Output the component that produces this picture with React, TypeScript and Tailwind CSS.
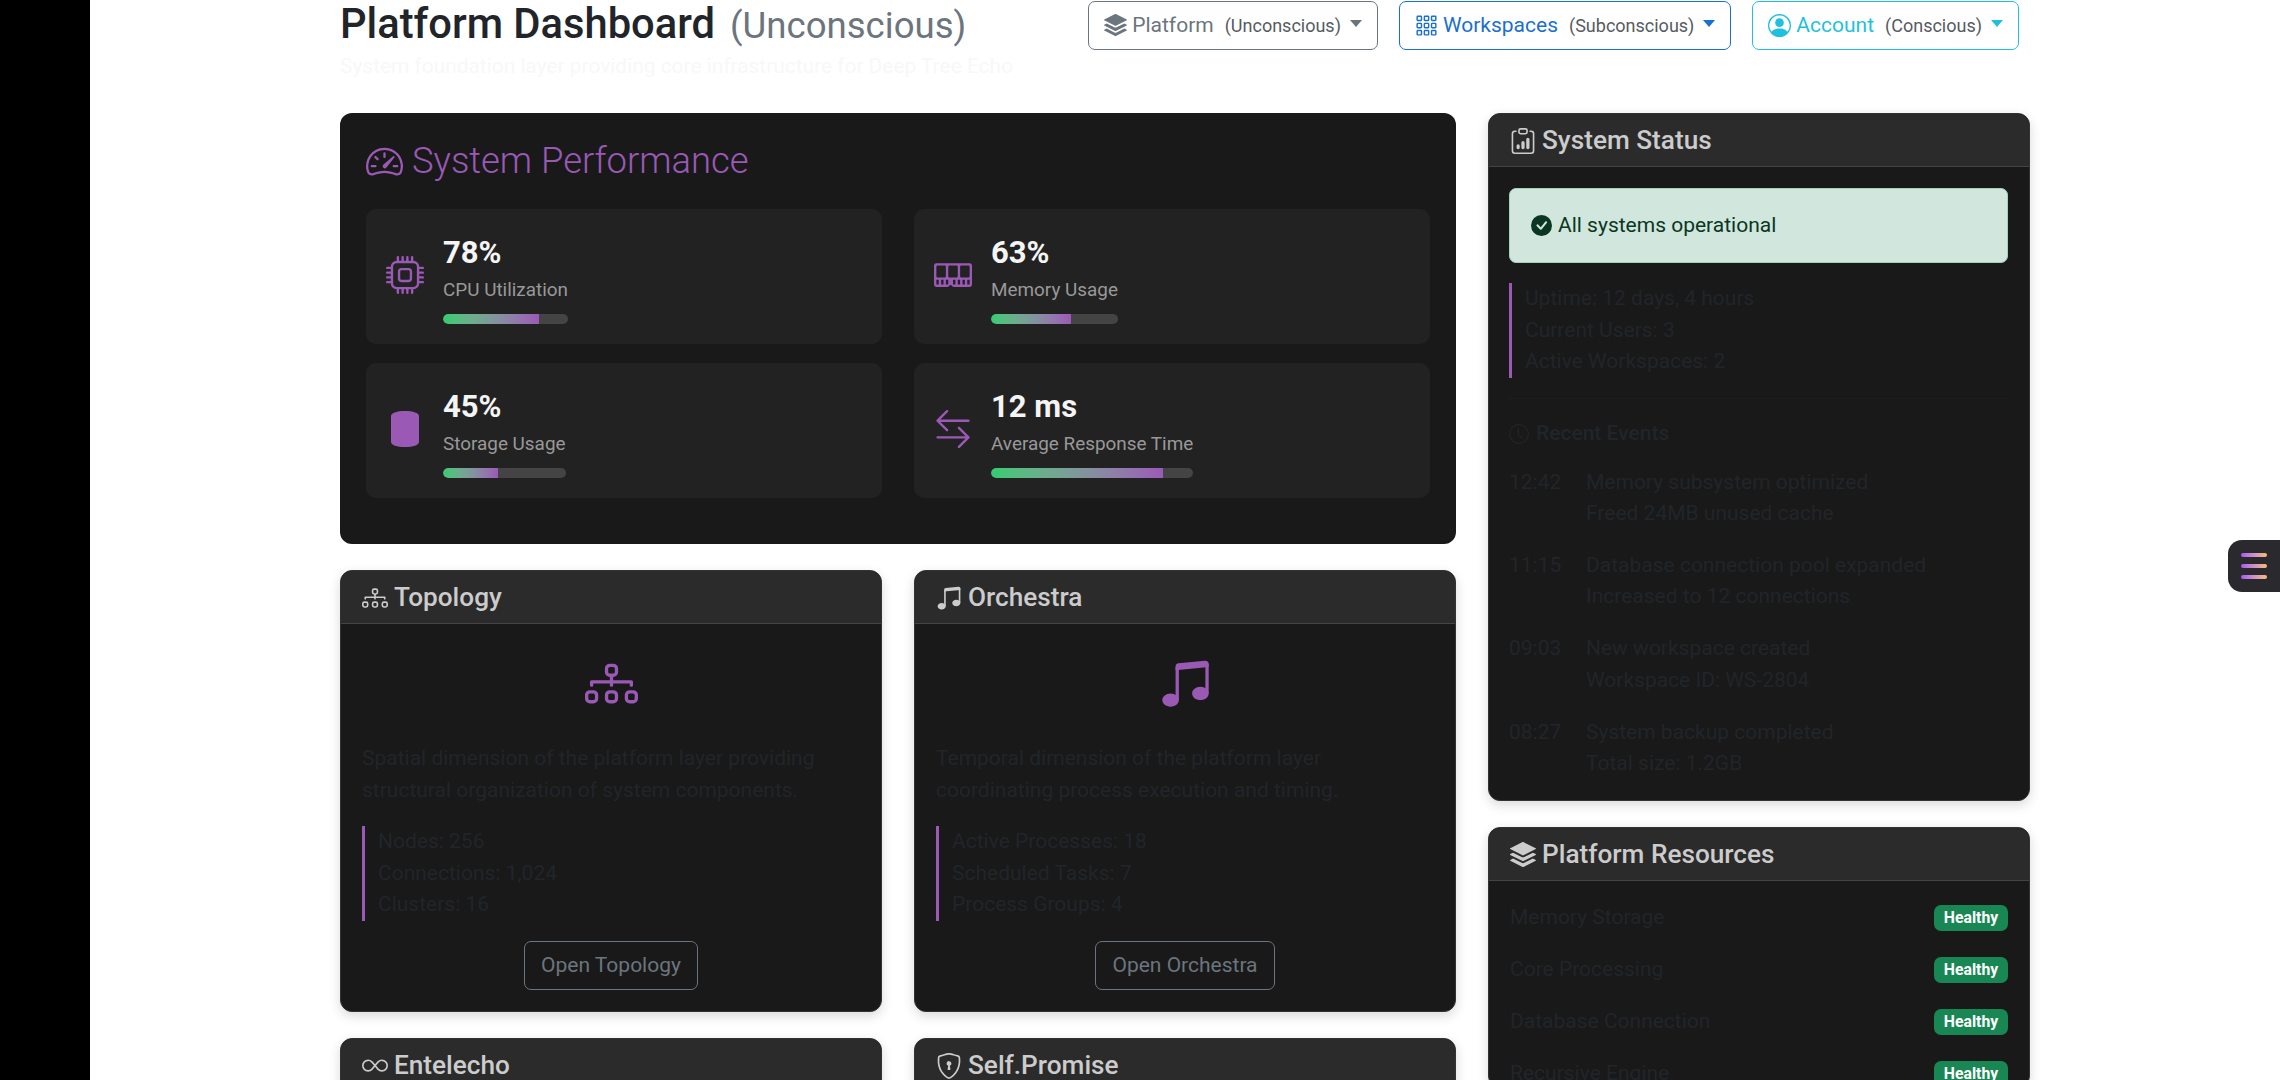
import React from "react";
import {
  BsSpeedometer2, BsCpu, BsMemory, BsArrowLeftRight, BsDiagram3, BsMusicNoteBeamed, BsInfinity,
  BsShieldLock, BsClipboardData, BsCheckCircleFill, BsClock, BsStack, BsGrid3X3Gap, BsPersonCircle,
} from "react-icons/bs";

const Dropdown = ({ icon, label, sub, cls }: { icon: React.ReactNode; label: string; sub: string; cls: string }) => (
  <div className={`flex items-center h-[49px] px-[15px] rounded-[7px] border bg-white text-[21px] ${cls}`}>
    <span className="text-[23px] mr-[5px] flex">{icon}</span>
    <span>{label}</span>
    <span className="ml-[11px] text-[18px] text-[#555b61]">{sub}</span>
    <span className="ml-[9px] w-0 h-0 border-x-[6px] border-x-transparent border-t-[7px] border-t-current mb-[4px]"></span>
  </div>
);

const Stat = ({ icon, value, label, pct }: { icon: React.ReactNode; value: string; label: string; pct: number }) => (
  <div className="bg-[#222222] rounded-[10px] flex items-center h-[135px] pl-[20px]">
    <div className="w-[38px] flex justify-center text-[#9b59b6] text-[38px] mr-[19px] mb-[4px]">{icon}</div>
    <div className="flex flex-col mt-[5px]">
      <div className="text-[31px] leading-[37px] font-bold text-[#f5f5f5]">{value}</div>
      <div className="text-[18.9px] leading-[26px] mt-[6px] text-[#999999]">{label}</div>
      <div className="h-[10px] mt-[11px] rounded-full bg-[#444444] overflow-hidden">
        <div className="h-full rounded-l-full bg-gradient-to-r from-[#2ecc71] to-[#9b59b6]" style={{ width: `${pct}%` }}></div>
      </div>
    </div>
  </div>
);

const Card = ({ icon, title, children }: { icon: React.ReactNode; title: string; children?: React.ReactNode }) => (
  <div className="bg-[#191919] rounded-[12px] border border-[#333333] overflow-hidden shadow-[0_4px_12px_rgba(0,0,0,0.15)]">
    <div className="h-[53px] pt-px bg-[#2b2b2b] border-b border-[#444444] flex items-center pl-[21px] text-[#cccccc] text-[26.2px] font-medium">
      <span className="text-[26px] flex mr-[6px]">{icon}</span>
      <span>{title}</span>
    </div>
    {children}
  </div>
);

const Info = ({ lines }: { lines: string[] }) => (
  <div className="border-l-[3px] border-[#9b59b6] pl-[13px] text-[21px] leading-[31.5px] text-[#212529]">
    {lines.map((l) => (<div key={l}>{l}</div>))}
  </div>
);

const Feature = ({ icon, title, big, desc, lines, btn }: { icon: React.ReactNode; title: string; big: React.ReactNode; desc: string[]; lines: string[]; btn: string }) => (
  <Card icon={icon} title={title}>
    <div className="px-[21px] pt-[33px] pb-[21px] h-[387px]">
      <div className="flex justify-center text-[#9b59b6] text-[53px] h-[53px] mb-[33px]">{big}</div>
      <div className="text-[21px] leading-[31.5px] text-[#212529] mb-[20px]">
        {desc.map((d) => (<div key={d}>{d}</div>))}
      </div>
      <Info lines={lines} />
      <div className="flex justify-center mt-[20px]">
        <div className="h-[49px] px-[16px] pt-px flex items-center rounded-[7px] border border-[#6c757d] text-[#6c757d] text-[21px]">{btn}</div>
      </div>
    </div>
  </Card>
);

const events = [
  ["12:42", "Memory subsystem optimized", "Freed 24MB unused cache"],
  ["11:15", "Database connection pool expanded", "Increased to 12 connections"],
  ["09:03", "New workspace created", "Workspace ID: WS-2804"],
  ["08:27", "System backup completed", "Total size: 1.2GB"],
];

const Cylinder = () => (
  <svg width="28" height="36" viewBox="0 0 28 36" fill="currentColor"><path d="M0 5C0 2 6 0 14 0s14 2 14 5v26c0 3-6 5-14 5S0 34 0 31z" /></svg>
);

export default function App() {
  return (
    <div className="relative h-[1080px] w-[2280px] overflow-hidden bg-white flex font-['Roboto',sans-serif]">
      <div className="w-[90px] shrink-0 bg-black"></div>
      <div className="pl-[250px] w-[1940px] shrink-0">
        <div className="flex justify-between h-[113px] pr-[11px] pt-px">
          <div>
            <div className="flex items-baseline h-[46px] text-[#212529]">
              <span className="text-[41.7px] leading-[46px] font-medium">Platform Dashboard</span>
              <span className="text-[36.6px] leading-[46px] text-[#6c757d] ml-[15px]">(Unconscious)</span>
            </div>
            <div className="text-[20.9px] leading-[30px] mt-[4px] text-[#f8f8f8]">System foundation layer providing core infrastructure for Deep Tree Echo</div>
          </div>
          <div className="flex gap-[21px] h-[49px]">
            <Dropdown icon={<BsStack />} label="Platform" sub="(Unconscious)" cls="border-[#6c757d] text-[#6c757d]" />
            <Dropdown icon={<BsGrid3X3Gap />} label="Workspaces" sub="(Subconscious)" cls="border-[#1a6fd0] text-[#1a6fd0]" />
            <Dropdown icon={<BsPersonCircle />} label="Account" sub="(Conscious)" cls="border-[#1fc0df] text-[#1fc0df]" />
          </div>
        </div>
        <div className="grid grid-cols-[1116px_542px] gap-x-[32px]">
          <div className="flex flex-col">
            <div className="bg-[#191919] rounded-[12px] h-[431px] px-[26px] pt-[25px] mb-[26px]">
              <div className="flex items-center h-[47px] text-[#9b59b6] text-[36.4px] font-light mb-[24px]">
                <BsSpeedometer2 className="text-[37px] mr-[9px]" />
                <span>System Performance</span>
              </div>
              <div className="grid grid-cols-2 gap-x-[32px] gap-y-[19px]">
                <Stat icon={<BsCpu />} value="78%" label="CPU Utilization" pct={77} />
                <Stat icon={<BsMemory />} value="63%" label="Memory Usage" pct={63} />
                <Stat icon={<Cylinder />} value="45%" label="Storage Usage" pct={45} />
                <Stat icon={<BsArrowLeftRight />} value="12 ms" label="Average Response Time" pct={85} />
              </div>
            </div>
            <div className="grid grid-cols-2 gap-x-[32px] gap-y-[26px]">
              <Feature icon={<BsDiagram3 />} title="Topology" big={<BsDiagram3 />}
                desc={["Spatial dimension of the platform layer providing", "structural organization of system components."]}
                lines={["Nodes: 256", "Connections: 1,024", "Clusters: 16"]} btn="Open Topology" />
              <Feature icon={<BsMusicNoteBeamed />} title="Orchestra" big={<BsMusicNoteBeamed />}
                desc={["Temporal dimension of the platform layer", "coordinating process execution and timing."]}
                lines={["Active Processes: 18", "Scheduled Tasks: 7", "Process Groups: 4"]} btn="Open Orchestra" />
              <Card icon={<BsInfinity />} title="Entelecho" />
              <Card icon={<BsShieldLock />} title="Self.Promise" />
            </div>
          </div>
          <div className="flex flex-col">
            <Card icon={<BsClipboardData />} title="System Status">
              <div className="pl-[20px] pr-[21px] pt-[21px] h-[633px]">
                <div className="h-[75px] rounded-[7px] bg-[#d1e7dd] border border-[#a3cfbb] text-[#0a3622] text-[21px] flex items-center pl-[21px]">
                  <BsCheckCircleFill className="text-[21px] mr-[6px]" />
                  <span>All systems operational</span>
                </div>
                <div className="mt-[20px]">
                  <Info lines={["Uptime: 12 days, 4 hours", "Current Users: 3", "Active Workspaces: 2"]} />
                </div>
                <div className="border-t border-[#1e1e1e] mt-[20px] pt-[20px]">
                  <div className="flex items-center text-[#212529] text-[21px] font-medium h-[30px] mb-[18px]">
                    <BsClock className="mr-[7px] text-[20px]" />
                    <span>Recent Events</span>
                  </div>
                  <div className="flex flex-col gap-[20.4px] text-[21px] leading-[31.5px] text-[#212529]">
                    {events.map((e) => (
                      <div key={e[0]} className="flex">
                        <div className="w-[77px] shrink-0">{e[0]}</div>
                        <div>
                          <div>{e[1]}</div>
                          <div>{e[2]}</div>
                        </div>
                      </div>
                    ))}
                  </div>
                </div>
              </div>
            </Card>
            <div className="mt-[26px]">
              <Card icon={<BsStack />} title="Platform Resources">
                <div className="px-[21px] pt-[24px] flex flex-col gap-[26px]">
                  {["Memory Storage", "Core Processing", "Database Connection", "Recursive Engine"].map((r) => (
                    <div key={r} className="flex justify-between items-center h-[26px]">
                      <span className="text-[21px] text-[#212529]">{r}</span>
                      <span className="w-[74px] h-[26px] rounded-[7px] bg-[#198754] text-white text-[15.75px] font-bold flex items-center justify-center">Healthy</span>
                    </div>
                  ))}
                </div>
              </Card>
            </div>
          </div>
        </div>
      </div>
      <div className="absolute left-[2228px] top-[540px] w-[52px] h-[52px] rounded-l-[14px] bg-[#2a2a2e] flex flex-col items-start justify-center gap-[7px] pl-[13px]">
        <div className="w-[26px] h-[4px] rounded-full bg-gradient-to-r from-[#a855f7] to-[#fdba74]"></div>
        <div className="w-[26px] h-[4px] rounded-full bg-gradient-to-r from-[#a855f7] to-[#fdba74]"></div>
        <div className="w-[26px] h-[4px] rounded-full bg-gradient-to-r from-[#a855f7] to-[#fdba74]"></div>
      </div>
    </div>
  );
}
